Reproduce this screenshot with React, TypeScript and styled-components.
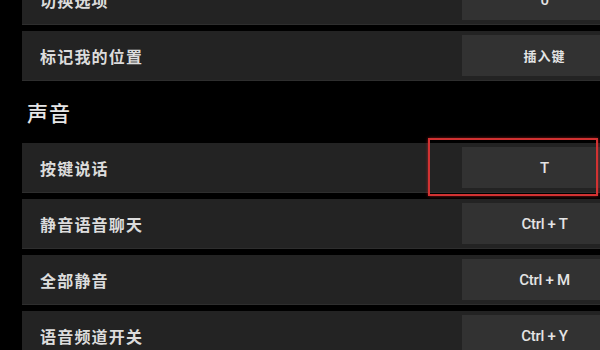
import React from 'react'
import styled, { createGlobalStyle } from 'styled-components'

const GlobalStyle = createGlobalStyle`
  html, body {
    margin: 0;
    padding: 0;
    background: #000;
    overflow: hidden;
  }
  body {
    width: 600px;
    height: 350px;
    font-family: "Noto Sans CJK SC", "Noto Sans", sans-serif;
  }
`

const Page = styled.div`
  width: 640px;
  padding-left: 22px;
  margin-top: -25px;
  display: flex;
  flex-direction: column;
`

const Group = styled.div`
  display: flex;
  flex-direction: column;
  gap: 6px;
`

const SectionTitle = styled.h2`
  margin: 0;
  height: 62px;
  display: flex;
  align-items: center;
  padding-left: 5px;
  font-size: 21px;
  font-weight: 500;
  letter-spacing: 1px;
  color: #e6e6e6;
`

const Row = styled.div`
  position: relative;
  width: 605px;
  height: 50px;
  padding-left: 18px;
  display: grid;
  grid-template-columns: 1fr 165px;
  background: #232323;
  border-bottom: 1px solid #2e2e2e;
  box-sizing: border-box;
`

const Label = styled.span`
  display: flex;
  align-items: center;
  font-size: 16px;
  font-weight: 700;
  letter-spacing: 1.2px;
  color: #dcdcdc;
`

const KeyCell = styled.span<{ $cjk?: boolean }>`
  margin: 4px 0;
  display: flex;
  align-items: center;
  justify-content: center;
  background: #323232;
  color: #e4e4e4;
  font-family: ${({ $cjk }) => ($cjk ? '"Noto Sans CJK SC", sans-serif' : 'Roboto, "Noto Sans", sans-serif')};
  font-size: ${({ $cjk }) => ($cjk ? '13px' : '15px')};
  font-weight: ${({ $cjk }) => ($cjk ? 700 : 500)};
  letter-spacing: ${({ $cjk }) => ($cjk ? '1px' : '-0.3px')};
`

const Highlight = styled.div`
  position: absolute;
  left: 406px;
  top: -5px;
  width: 170px;
  height: 58px;
  box-sizing: border-box;
  border: 2px solid #d23232;
  box-shadow: 0 0 3px rgba(220, 40, 40, 0.6);
  pointer-events: none;
`

interface Binding {
  label: string
  keyName: string
  active?: boolean
}

const general: Binding[] = [
  { label: '切换选项', keyName: '0' },
  { label: '标记我的位置', keyName: '插入键' },
]

const voice: Binding[] = [
  { label: '按键说话', keyName: 'T', active: true },
  { label: '静音语音聊天', keyName: 'Ctrl + T' },
  { label: '全部静音', keyName: 'Ctrl + M' },
  { label: '语音频道开关', keyName: 'Ctrl + Y' },
]

function BindingRow({ label, keyName, active }: Binding) {
  const cjk = /[\u4e00-\u9fff]/.test(keyName)

  return (
    <Row>
      <Label>{label}</Label>
      <KeyCell $cjk={cjk}>{keyName}</KeyCell>
      {active && <Highlight />}
    </Row>
  )
}

export default function App() {
  return (
    <>
      <GlobalStyle />
      <Page>
        <Group>
          {general.map((b) => (
            <BindingRow key={b.label} {...b} />
          ))}
        </Group>
        <SectionTitle>声音</SectionTitle>
        <Group>
          {voice.map((b) => (
            <BindingRow key={b.label} {...b} />
          ))}
        </Group>
      </Page>
    </>
  )
}
